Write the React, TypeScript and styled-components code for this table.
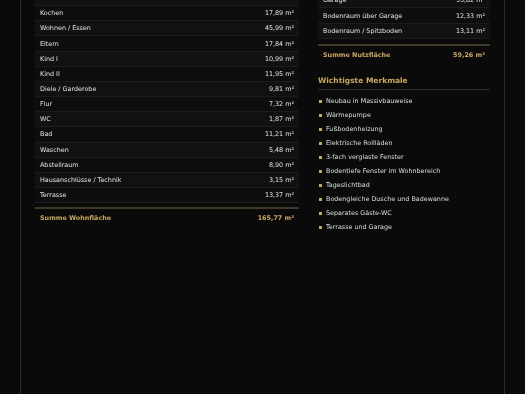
import styled, { createGlobalStyle } from 'styled-components'

const GlobalStyle = createGlobalStyle`
  html, body {
    margin: 0;
    padding: 0;
    background: #0a0a0a;
    overflow: hidden;
  }
  body {
    font-family: "DejaVu Sans", Verdana, sans-serif;
    color: #dcdcdc;
  }
`

const Frame = styled.div`
  width: 485px;
  margin-left: 20px;
  min-height: 420px;
  box-sizing: border-box;
  border-left: 1px solid #2c2c2c;
  border-right: 1px solid #2c2c2c;
  padding: 0 14px;
  will-change: transform;
`

// the screenshot is taken a little way down the page
const Columns = styled.div`
  display: grid;
  grid-template-columns: 264px 172px;
  column-gap: 19px;
  align-items: start;
  margin-top: -9.1px;
`

const Column = styled.div<{ $offset?: number }>`
  padding-top: ${(p) => p.$offset ?? 0}px;
`

const Table = styled.div``

const Row = styled.div`
  display: flex;
  justify-content: space-between;
  align-items: center;
  height: 15.17px;
  box-sizing: border-box;
  padding: 0 5px;
  font-size: 6.4px;
  color: #e2e2e2;
  background: #111111;
  border-bottom: 1px solid #1c1c1c;

  &:nth-child(even) {
    background: #0d0d0d;
  }
`

const SumRow = styled.div<{ $gap: number }>`
  display: flex;
  justify-content: space-between;
  margin-top: ${(p) => p.$gap}px;
  border-top: 2px solid #3f3727;
  padding: 5px 5px;
  font-size: 6.4px;
  line-height: 8px;
  font-weight: bold;
  color: #c9a862;
`

const Heading = styled.h3`
  margin: 12.5px 0 0;
  padding-bottom: 3px;
  border-bottom: 1px solid #2e2e2e;
  font-size: 7.5px;
  line-height: 10px;
  font-weight: bold;
  color: #c9a862;
`

const FeatureList = styled.ul`
  list-style: none;
  margin: 4px 0 0;
  padding: 0;
`

const Feature = styled.li`
  display: flex;
  align-items: center;
  height: 14px;
  font-size: 6.4px;
  color: #dedede;

  &::before {
    content: '';
    width: 3px;
    height: 3px;
    margin: 0 4px 0 1px;
    background: #c9a862;
  }
`

const living: [string, string][] = [
  ['Wohnfläche', '—'],
  ['Kochen', '17,89 m²'],
  ['Wohnen / Essen', '45,99 m²'],
  ['Eltern', '17,84 m²'],
  ['Kind I', '10,99 m²'],
  ['Kind II', '11,95 m²'],
  ['Diele / Garderobe', '9,81 m²'],
  ['Flur', '7,32 m²'],
  ['WC', '1,87 m²'],
  ['Bad', '11,21 m²'],
  ['Waschen', '5,48 m²'],
  ['Abstellraum', '8,90 m²'],
  ['Hausanschlüsse / Technik', '3,15 m²'],
  ['Terrasse', '13,37 m²'],
]

const usable: [string, string][] = [
  ['Garage', '33,82 m²'],
  ['Bodenraum über Garage', '12,33 m²'],
  ['Bodenraum / Spitzboden', '13,11 m²'],
]

const features = [
  'Neubau in Massivbauweise',
  'Wärmepumpe',
  'Fußbodenheizung',
  'Elektrische Rollläden',
  '3-fach verglaste Fenster',
  'Bodentiefe Fenster im Wohnbereich',
  'Tageslichtbad',
  'Bodengleiche Dusche und Badewanne',
  'Separates Gäste-WC',
  'Terrasse und Garage',
]

export default function App() {
  return (
    <>
      <GlobalStyle />
      <Frame>
        <Columns>
          <Column>
            <Table>
              {living.map(([name, area]) => (
                <Row key={name}>
                  <span>{name}</span>
                  <span>{area}</span>
                </Row>
              ))}
            </Table>
            <SumRow $gap={4.3}>
              <span>Summe Wohnfläche</span>
              <span>165,77 m²</span>
            </SumRow>
          </Column>
          <Column $offset={2.3}>
            <Table>
              {usable.map(([name, area]) => (
                <Row key={name}>
                  <span>{name}</span>
                  <span>{area}</span>
                </Row>
              ))}
            </Table>
            <SumRow $gap={5}>
              <span>Summe Nutzfläche</span>
              <span>59,26 m²</span>
            </SumRow>
            <Heading>Wichtigste Merkmale</Heading>
            <FeatureList>
              {features.map((f) => (
                <Feature key={f}>{f}</Feature>
              ))}
            </FeatureList>
          </Column>
        </Columns>
      </Frame>
    </>
  )
}
